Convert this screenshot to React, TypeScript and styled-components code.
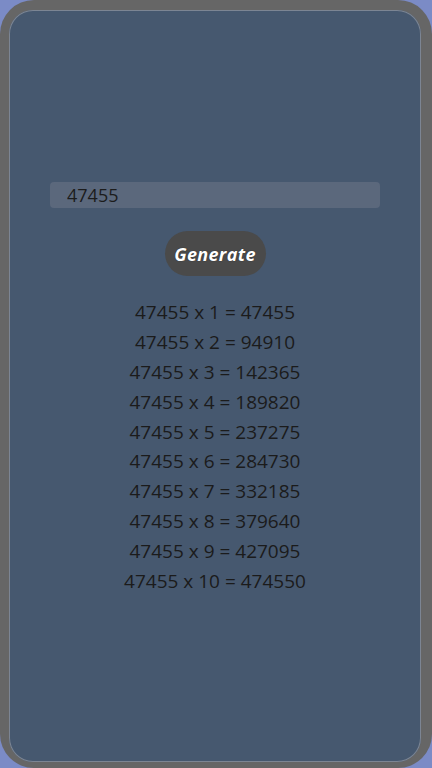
import React, { useState } from 'react'
import styled, { createGlobalStyle } from 'styled-components'

const Global = createGlobalStyle`
  html, body {
    margin: 0;
    padding: 0;
    background: #7b8bc6;
  }
  * { box-sizing: border-box; }
`

const Frame = styled.div`
  width: 432px;
  height: 768px;
  padding: 10px 11px 6px 9px;
  background: #666666;
  border-radius: 34px;
`

const Screen = styled.main`
  height: 100%;
  background: #46586f;
  border-radius: 24px;
  box-shadow: inset 0 0 0 1px #7c8593;
  display: flex;
  flex-direction: column;
  align-items: center;
  padding-top: 172px;
  font-family: 'Open Sans', 'Noto Sans', sans-serif;
`

const Input = styled.input`
  width: 330px;
  height: 26px;
  border: none;
  border-radius: 4px;
  background: #5b687c;
  padding: 0 0 0 17px;
  font-family: inherit;
  font-size: 18px;
  color: #1c1c1c;
  outline: none;
`

const Button = styled.button`
  margin-top: 23px;
  width: 101px;
  height: 45px;
  padding: 0;
  border: none;
  border-radius: 23px;
  background: #4a4a4a;
  color: #ffffff;
  font-family: 'Open Sans', sans-serif;
  font-style: italic;
  font-weight: 700;
  font-size: 18px;
  letter-spacing: 0.3px;
  text-shadow: 0 0 1px rgba(0, 0, 0, 0.6);
  cursor: pointer;
`

const Table = styled.ul`
  list-style: none;
  margin: 22px 0 0;
  padding: 0;
  display: flex;
  flex-direction: column;
  align-items: center;
`

const Row = styled.li`
  height: 29.9px;
  line-height: 29.9px;
  font-size: 19px;
  color: #1b1b1b;
  white-space: nowrap;
`

const App: React.FC = () => {
  const [value, setValue] = useState('47455')
  const [num, setNum] = useState(47455)

  return (
    <>
      <Global />
      <Frame>
        <Screen>
          <Input value={value} onChange={e => setValue(e.target.value)} />
          <Button onClick={() => setNum(Number(value) || 0)}>Generate</Button>
          <Table>
            {Array.from({ length: 10 }, (_, i) => (
              <Row key={i}>
                {num} x {i + 1} = {num * (i + 1)}
              </Row>
            ))}
          </Table>
        </Screen>
      </Frame>
    </>
  )
}

export default App
